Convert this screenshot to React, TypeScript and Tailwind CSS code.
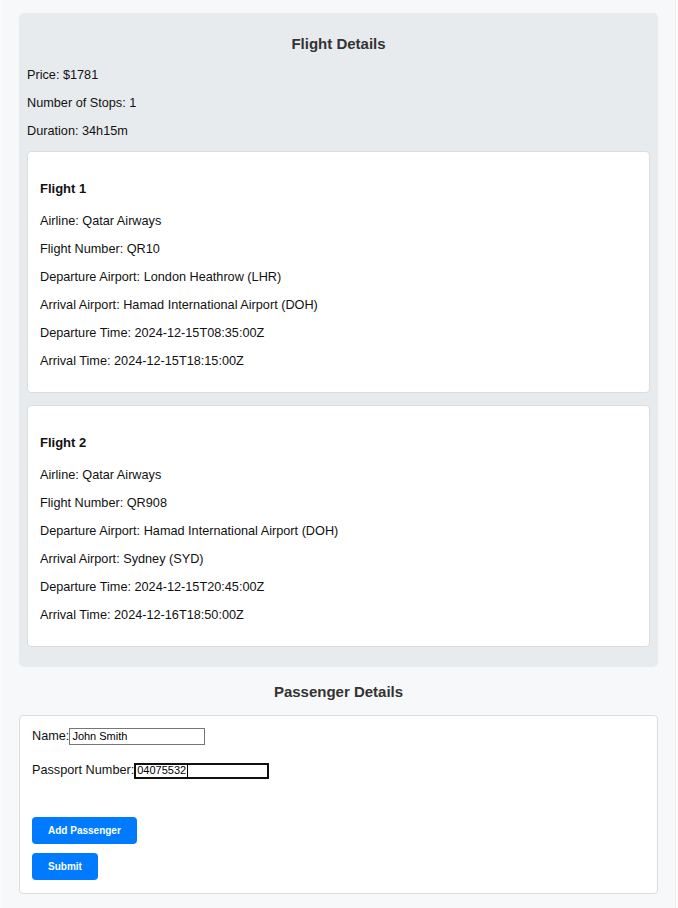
const flights = [
  {
    title: "Flight 1",
    airline: "Qatar Airways",
    number: "QR10",
    from: "London Heathrow (LHR)",
    to: "Hamad International Airport (DOH)",
    dep: "2024-12-15T08:35:00Z",
    arr: "2024-12-15T18:15:00Z",
  },
  {
    title: "Flight 2",
    airline: "Qatar Airways",
    number: "QR908",
    from: "Hamad International Airport (DOH)",
    to: "Sydney (SYD)",
    dep: "2024-12-15T20:45:00Z",
    arr: "2024-12-16T18:50:00Z",
  },
];

const FlightCard = ({ f }: { f: (typeof flights)[number] }) => (
  <div className="rounded-[4px] border border-[#dcdcdc] bg-white px-3 pt-[29px] pb-[23px]">
    <h4 className="text-[13px] font-bold leading-[15px] text-[#111]">{f.title}</h4>
    <div className="mt-[18px] flex flex-col gap-[13px]">
      <p>Airline: {f.airline}</p>
      <p>Flight Number: {f.number}</p>
      <p>Departure Airport: {f.from}</p>
      <p>Arrival Airport: {f.to}</p>
      <p>Departure Time: {f.dep}</p>
      <p>Arrival Time: {f.arr}</p>
    </div>
  </div>
);

export default function App() {
  return (
    <div className="min-h-screen bg-[#fbfbfc] px-[2px] font-['Liberation_Sans',Arial,sans-serif] text-[12.7px] leading-[15px] text-[#111]">
      <div className="min-h-screen border-r border-[#eeeff1] bg-[#f7f8fa] px-[17px] pt-[13px] pb-[15px]">
        <section className="rounded-[5px] bg-[#e8ebee] px-2 pt-[22px] pb-5">
          <h3 className="text-center text-[15px] font-bold leading-[17px] text-[#333]">Flight Details</h3>
          <div className="mt-[16px] flex flex-col gap-[13px]">
            <p>Price: $1781</p>
            <p>Number of Stops: 1</p>
            <p>Duration: 34h15m</p>
          </div>
          <div className="mt-[12px] flex flex-col gap-[12px]">
            {flights.map((f) => (
              <FlightCard key={f.title} f={f} />
            ))}
          </div>
        </section>

        <h3 className="mt-4 text-center text-[15px] font-bold leading-[17px] text-[#333]">Passenger Details</h3>

        <div className="mt-[15px] rounded-[4px] border border-[#dcdcdc] bg-white px-3 pt-3 pb-[13px]">
          <div className="flex h-[17px] items-center">
            <span>Name:</span>
            <div className="flex h-[17px] w-[136px] items-center border border-[#767676] px-[2px] text-[11px] leading-[13px] text-black">
              John Smith
            </div>
          </div>
          <div className="mt-[17px] flex h-[17px] items-center">
            <span>Passport Number:</span>
            <div className="flex h-[16px] w-[135px] items-center border-2 border-[#101010] px-[1px] text-[11px] leading-[13px] text-black">
              04075532
              <span className="ml-px inline-block h-[12px] w-px bg-black" />
            </div>
          </div>
          <div className="mt-[38px] flex flex-col items-start gap-[9px]">
            <button className="h-[27px] rounded-[4px] bg-[#007bff] px-4 text-[10px] font-bold text-white">
              Add Passenger
            </button>
            <button className="h-[27px] rounded-[4px] bg-[#007bff] px-4 text-[10px] font-bold text-white">
              Submit
            </button>
          </div>
        </div>
      </div>
    </div>
  );
}
